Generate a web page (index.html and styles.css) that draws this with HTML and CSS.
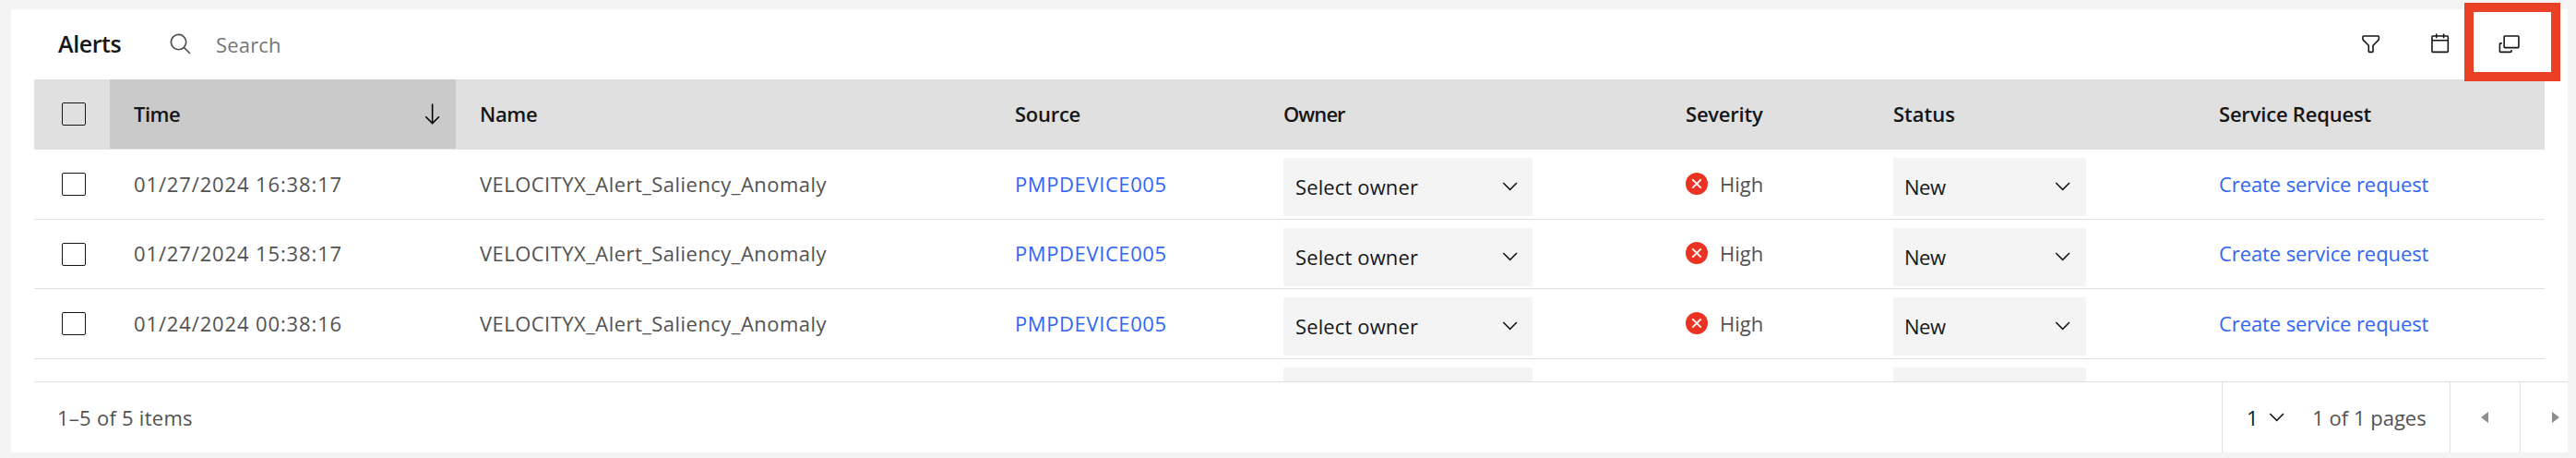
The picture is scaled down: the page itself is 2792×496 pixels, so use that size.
FILE: index.html
```html
<!DOCTYPE html>
<html lang="en">
<head>
<meta charset="utf-8">
<title>Alerts</title>
<link rel="stylesheet" href="styles.css">
</head>
<body>
<svg class="defs" aria-hidden="true">
  <symbol id="chevron" viewBox="0 0 16 16"><path d="M8 11L3 6l.7-.7L8 9.6l4.3-4.3.7.7z"/></symbol>
  <symbol id="error" viewBox="0 0 24 24"><circle cx="12" cy="12" r="12" fill="#eb3223"/><path d="M7.3 7.3l9.4 9.4M16.7 7.3l-9.4 9.4" stroke="#fff" stroke-width="1.9" fill="none"/></symbol>
</svg>
<main class="card">
  <header class="toolbar">
    <h1 class="title">Alerts</h1>
    <svg class="icon search-icon" viewBox="0 0 32 32"><path d="M29 27.586l-7.552-7.552a11.018 11.018 0 10-1.414 1.414L27.586 29zM4 13a9 9 0 119 9 9.01 9.01 0 01-9-9z"/></svg>
    <span class="search">Search</span>
    <div class="actions">
      <svg class="icon" viewBox="0 0 32 32"><path d="M18 28h-4a2 2 0 01-2-2v-7.59L4.59 11A2 2 0 014 9.59V6a2 2 0 012-2h20a2 2 0 012 2v3.59a2 2 0 01-.59 1.41L20 18.41V26a2 2 0 01-2 2zM6 6v3.59l8 8V26h4v-8.41l8-8V6z"/></svg>
      <svg class="icon" viewBox="0 0 32 32"><path d="M26 4h-4V2h-2v2h-8V2h-2v2H6a2 2 0 00-2 2v20a2 2 0 002 2h20a2 2 0 002-2V6a2 2 0 00-2-2zm0 22H6V12h20zm0-16H6V6h4v2h2V6h8v2h2V6h4z"/></svg>
      <svg class="icon" viewBox="0 0 32 32"><path d="M28 4H10a2 2 0 00-2 2v14a2 2 0 002 2h18a2 2 0 002-2V6a2 2 0 00-2-2zm0 16H10V6h18z"/><path d="M18 26H4V16h2v-2H4a2 2 0 00-2 2v10a2 2 0 002 2h14a2 2 0 002-2v-2h-2z"/></svg>
    </div>
    <div class="highlight"></div>
  </header>

  <section class="table">
    <div class="row head">
      <div class="cell check"><span class="box"></span></div>
      <div class="cell sorted"><span class="t-time">Time</span><svg class="sort" viewBox="0 0 16 16"><path d="M12.3 9.3L8.5 13.1V1h-1v12.1L3.7 9.3 3 10l5 5 5-5z"/></svg></div>
      <div class="cell t-name">Name</div>
      <div class="cell t-source">Source</div>
      <div class="cell t-owner">Owner</div>
      <div class="cell t-severity">Severity</div>
      <div class="cell">Status</div>
      <div class="cell t-service">Service Request</div>
    </div>
    <div class="row">
      <div class="cell check"><span class="box"></span></div>
      <div class="cell date">01/27/2024 16:38:17</div>
      <div class="cell name">VELOCITYX_Alert_Saliency_Anomaly</div>
      <div class="cell device"><a>PMPDEVICE005</a></div>
      <div class="cell pick"><div class="select owner"><span>Select owner</span><svg class="chev"><use href="#chevron"/></svg></div></div>
      <div class="cell sev"><svg class="error"><use href="#error"/></svg><span>High</span></div>
      <div class="cell pick"><div class="select status"><span>New</span><svg class="chev"><use href="#chevron"/></svg></div></div>
      <div class="cell create"><a>Create service request</a></div>
    </div>
    <div class="row short">
      <div class="cell check"><span class="box"></span></div>
      <div class="cell date">01/27/2024 15:38:17</div>
      <div class="cell name">VELOCITYX_Alert_Saliency_Anomaly</div>
      <div class="cell device"><a>PMPDEVICE005</a></div>
      <div class="cell pick"><div class="select owner"><span>Select owner</span><svg class="chev"><use href="#chevron"/></svg></div></div>
      <div class="cell sev"><svg class="error"><use href="#error"/></svg><span>High</span></div>
      <div class="cell pick"><div class="select status"><span>New</span><svg class="chev"><use href="#chevron"/></svg></div></div>
      <div class="cell create"><a>Create service request</a></div>
    </div>
    <div class="row">
      <div class="cell check"><span class="box"></span></div>
      <div class="cell date">01/24/2024 00:38:16</div>
      <div class="cell name">VELOCITYX_Alert_Saliency_Anomaly</div>
      <div class="cell device"><a>PMPDEVICE005</a></div>
      <div class="cell pick"><div class="select owner"><span>Select owner</span><svg class="chev"><use href="#chevron"/></svg></div></div>
      <div class="cell sev"><svg class="error"><use href="#error"/></svg><span>High</span></div>
      <div class="cell pick"><div class="select status"><span>New</span><svg class="chev"><use href="#chevron"/></svg></div></div>
      <div class="cell create"><a>Create service request</a></div>
    </div>
    <div class="row">
      <div class="cell"></div><div class="cell"></div><div class="cell"></div><div class="cell"></div>
      <div class="cell pick"><div class="select owner"></div></div>
      <div class="cell"></div>
      <div class="cell pick"><div class="select status"></div></div>
      <div class="cell"></div>
    </div>
  </section>

  <footer class="pagination">
    <span class="count">1–5 of 5 items</span>
    <div class="page"><span class="current">1</span><svg class="chev"><use href="#chevron"/></svg><span class="pages">1 of 1 pages</span></div>
    <div class="nav prev"><svg class="tri" viewBox="0 0 8 12"><path d="M8 0v12L0 6z"/></svg></div>
    <div class="nav next"><svg class="tri" viewBox="0 0 8 12"><path d="M0 0v12l8-6z"/></svg></div>
  </footer>
</main>
</body>
</html>
```
FILE: styles.css
```css
* { box-sizing: border-box; }
body {
  margin: 0;
  padding: 10px 9px 6px 12px;
  height: 496px;
  background: #f3f3f3;
  color: #161616;
  font: 22px/30px "Open Sans", "Noto Sans", sans-serif;
  white-space: nowrap;
  overflow: hidden;
}
svg { display: block; flex: none; }
.defs { width: 0; height: 0; position: absolute; }
.card {
  position: relative;
  height: 480px;
  background: #fff;
  display: flex;
  flex-direction: column;
}

.toolbar { height: 76px; display: flex; align-items: center; padding-left: 51px; }
.title { margin: 0; width: 120px; font-size: 25px; font-weight: 650; letter-spacing: -.4px; padding-bottom: 3px; }
.icon { width: 25.3px; height: 25.3px; }
.search-icon { width: 26px; height: 26px; fill: #525252; }
.search { margin-left: 25px; color: #757575; letter-spacing: .17px; padding-bottom: 1px; }
.actions { margin-left: auto; display: flex; gap: 49.5px; padding: 0 51px 1px 0; fill: #161616; }
.highlight { position: absolute; left: 2659px; top: -7px; width: 104px; height: 85px; border: 10px solid #ea4025; z-index: 1; }

.table { height: 327px; margin: 0 25px; overflow: hidden; }
.row {
  display: grid;
  grid-template-columns: 82px 375px 580px 291px 436px 225px 353px 379px;
  height: 76px;
  border-bottom: 1px solid #e0e0e0;
}
.short { height: 75px; }
.head { background: #e0e0e0; font-weight: 600; }
.cell { display: flex; align-items: center; padding: 0 0 2px 26px; color: #525252; }
.head .cell { color: #161616; }
.cell.check { padding: 0 0 0 30px; }
.box { width: 26px; height: 25px; border: 1px solid #161616; border-radius: 2px; }
.head .sorted { background: #cacaca; justify-content: space-between; padding-right: 13px; }
.sort { width: 25.3px; height: 25.3px; margin-top: 2px; }
.t-time { letter-spacing: -.5px; }
.t-name { letter-spacing: -.33px; }
.t-source { letter-spacing: -.28px; }
.t-owner { letter-spacing: -.95px; }
.t-severity { letter-spacing: -.22px; }
.t-service { letter-spacing: -.2px; }
.date { letter-spacing: .87px; }
.name { letter-spacing: .46px; }
.device { letter-spacing: .6px; }
.create { letter-spacing: -.09px; }
a { color: #2f66f5; }
.cell.pick { align-items: flex-start; padding-top: 9px; }
.select { height: 63px; background: #f4f4f4; color: #161616; display: flex; align-items: center; justify-content: space-between; padding: 0 12px 1px 13px; letter-spacing: .13px; }
.owner { width: 270px; }
.status { width: 209px; padding: 0 13px 1px 12px; letter-spacing: -.46px; }
.chev { width: 25.3px; height: 25.3px; fill: #161616; }
.error { width: 24px; height: 24px; margin: 0 13px 0 0; }
.cell span { flex: none; }

.pagination { height: 77px; margin-left: 25px; border-top: 1px solid #e0e0e0; display: flex; color: #525252; overflow: hidden; }
.count { align-self: center; margin-right: auto; padding: 0 0 1px 25px; letter-spacing: .26px; }
.page { width: 247px; border-left: 1px solid #e0e0e0; display: flex; align-items: center; padding: 0 0 1px 26px; }
.current { width: 20px; color: #161616; }
.pages { margin-left: 26px; }
.nav { width: 76px; border-left: 1px solid #e0e0e0; display: flex; align-items: center; padding-left: 33px; }
.next { width: 52px; padding-left: 34px; }
.tri { width: 8px; height: 12px; fill: #8d8d8d; }
```
